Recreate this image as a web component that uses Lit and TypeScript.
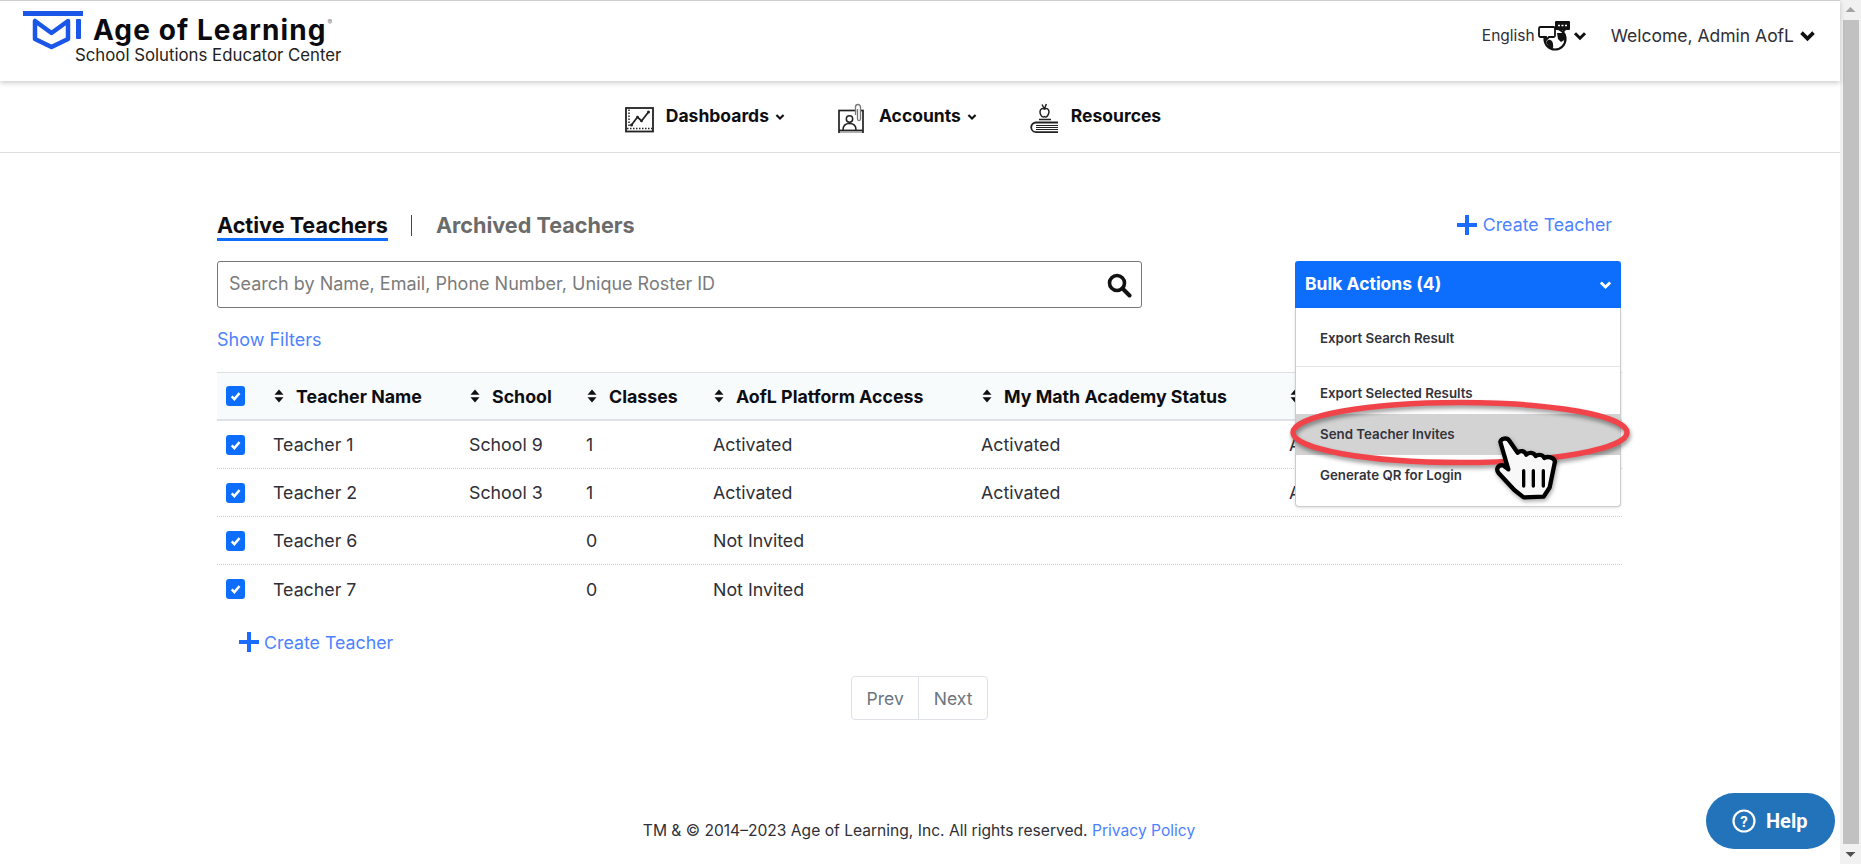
import {css, html, LitElement} from 'lit';
import {customElement} from 'lit/decorators.js';

const chevron = (cls: string) => html`<svg class=${cls} viewBox="0 0 14 10"><path d="M2 2.200l5 5 5-5" fill="none" stroke="currentColor" stroke-width="3"/></svg>`;
const sortIcon = html`<svg class="sort" viewBox="0 0 10 14"><path d="M5 0.500L9.500 5.800H.5zM5 13.500L.5 8.200h9z" fill="#111"/></svg>`;
const plus = (cls: string) => html`<svg class=${cls} viewBox="0 0 20 20"><path d="M10 0v20M0 10h20" stroke="#1a6bff" stroke-width="4" fill="none"/></svg>`;
const check = html`<span class="box"><svg viewBox="0 0 20 20"><path d="M6 10.500l2.800 2.800 5.400-6.300" fill="none" stroke="#fff" stroke-width="2.600"/></svg></span>`;

const rows = [
    {name: "Teacher 1", school: "School 9", classes: "1", access: "Activated", status: "Activated", last: "Activated"},
    {name: "Teacher 2", school: "School 3", classes: "1", access: "Activated", status: "Activated", last: "Activated"},
    {name: "Teacher 6", school: "", classes: "0", access: "Not Invited", status: "", last: ""},
    {name: "Teacher 7", school: "", classes: "0", access: "Not Invited", status: "", last: ""},
];
const columns = ["Teacher Name", "School", "Classes", "AofL Platform Access", "My Math Academy Status", "Status"];

@customElement('app-root')
export class AppRoot extends LitElement {
    static override styles = css`
      :host {
        display: flex;
        height: 864px;
        overflow: hidden;
        font-family: "Inter", "Lato", sans-serif;
        color: #2f2f37;
        position: relative;
      }
      .page { flex: 1; min-width: 0; display: flex; flex-direction: column; position: relative; }
      .scrollbar {
        width: 21px;
        background: #f1f1f1;
        display: flex;
        flex-direction: column;
        align-items: center;
      }
      .arrow { height: 20px; width: 100%; flex: none; }
      .thumb { flex: 1; width: 16px; background: #c1c1c1; }

      .top {
        height: 80px;
        border-top: 1px solid #cfcfcf;
        display: flex;
        align-items: flex-start;
        justify-content: space-between;
        box-shadow: 0 2px 5px rgba(0, 0, 0, 0.2);
        position: relative;
        background: #fff;
      }
      .logo { display: flex; padding: 9px 0 0 23px; }
      .logo-mark { width: 60px; height: 41px; flex: none; }
      .logo-text { margin-left: 10px; margin-top: -3px; }
      .logo-name { font: 700 28px/31px "Inter", sans-serif; color: #0b0b0f; letter-spacing: 1.100px; }
      .logo-name sup { font-size: 7px; font-weight: 400; color: #777; vertical-align: 15px; letter-spacing: 0; margin-left: 1px; }
      .logo-sub { font-size: 16.800px; line-height: 19px; color: #222; margin-left: -18px; }
      .user { display: flex; align-items: center; padding: 19px 24px 0 0; }
      .lang { font-size: 15.500px; }
      .globe { width: 32px; height: 31px; margin-left: 3px; }
      .chev-sm { width: 14px; height: 10px; color: #111; margin-left: 3px; }
      .welcome { font-size: 17.500px; margin-left: 24px; }
      .chev-lg { width: 17px; height: 12px; color: #111; margin-left: 5px; }

      nav {
        height: 71px;
        border-bottom: 1px solid #dedede;
        display: flex;
        justify-content: center;
        padding-right: 55px;
      }
      .nav-item { display: flex; align-items: center; margin: 0 26px; font-weight: 700; font-size: 17.500px; color: #0e0e12; }
      .nav-item svg.icon { width: 32px; height: 32px; margin-right: 10px; flex: none; }
      .nav-item .label { margin-top: -3px; }
      .nav-chev { width: 10px; height: 8px; margin-left: 6px; color: #111; }

      main { padding: 0 218px 0 217px; position: relative; flex: 1; }
      .tabs { display: flex; align-items: flex-start; justify-content: space-between; padding-top: 60px; height: 48px; }
      .tab-group { display: flex; align-items: flex-start; font-size: 21.600px; font-weight: 700; }
      .tab-active { color: #0e0e12; border-bottom: 3px solid #0d6efd; line-height: 25px; }
      .sep { width: 1px; height: 21px; background: #444; margin: 2px 24px 0 23px; }
      .tab-off { color: #6b6b6b; line-height: 25px; }
      .create { display: flex; align-items: center; color: #4d82ff; font-size: 17.800px; }
      .create-top { margin: -2px 10px 0 0; height: 27px; }
      .plus-top { width: 20px; height: 20px; margin-right: 6px; }
      .plus-low { width: 20px; height: 20px; margin-right: 5px; }

      .search {
        width: 925px;
        height: 47px;
        box-sizing: border-box;
        border: 1px solid #777;
        border-radius: 3px;
        display: flex;
        align-items: center;
        justify-content: space-between;
        padding: 0 9px 2px 11px;
        color: #7b7b7b;
        font-size: 18px;
      }
      .search svg { width: 26px; height: 26px; margin-top: 2px; }

      .filters { color: #4d82ff; font-size: 18px; line-height: 22px; margin: 21px 0 0 0; height: 43px; }

      .row {
        display: grid;
        grid-template-columns: 48px 196px 117px 127px 268px 308px 1fr;
        align-items: center;
        height: 48.100px;
        box-sizing: border-box;
        border-bottom: 1px dotted #ccc;
        font-size: 17.800px;
      }
      .head {
        height: 49px;
        background: #f7fbfc;
        border-top: 1px solid #dee2e6;
        border-bottom: 2px solid #dee2e6;
        font-weight: 700;
        font-size: 17.800px;
        color: #0e0e12;
      }
      .body .row:last-child { border-bottom: none; }
      .cell { padding-left: 8px; white-space: nowrap; overflow: hidden; }
      .cell-sort { padding-left: 9px; display: flex; align-items: center; white-space: nowrap; }
      .sort { width: 10px; height: 14px; margin-right: 12px; flex: none; }
      .box {
        display: block;
        width: 19px;
        height: 20px;
        background: #0d6efd;
        border-radius: 3px;
        margin-left: 9px;
      }
      .box svg { display: block; width: 100%; height: 100%; }
      .create-low { margin: 13px 0 0 22px; height: 32px; }

      .pager-wrap { display: flex; justify-content: center; margin-top: 18px; }
      .pager { display: flex; height: 44px; box-sizing: border-box; border: 1px solid #dee2e6; border-radius: 4px; color: #6c757d; font-size: 17.500px; }
      .pager span { display: flex; align-items: center; padding: 0 14.500px; }
      .pager span + span { border-left: 1px solid #dee2e6; }

      footer { position: absolute; left: 0; right: 0; top: 821px; text-align: center; font-size: 15.600px; line-height: 20px; color: #2f2f37; padding-right: 2px; }
      footer a { color: #4d82ff; }

      .menu-wrap { position: absolute; left: 1295px; top: 261px; width: 326px; }
      .bulk {
        height: 47px;
        background: #0d6efd;
        color: #fff;
        font-weight: 700;
        font-size: 17.500px;
        display: flex;
        align-items: center;
        justify-content: space-between;
        padding: 0 9px 2px 10px;
        box-sizing: border-box;
        border-radius: 3px 3px 0 0;
      }
      .bulk svg { width: 13px; height: 10px; margin-top: 2px; }
      .menu {
        background: #fff;
        border: 1px solid #ccc;
        border-top: none;
        border-radius: 0 0 4px 4px;
        height: 199px;
        box-sizing: border-box;
        font-size: 13.300px;
        font-weight: 600;
        color: #33333c;
        box-shadow: 0 1px 3px rgba(0, 0, 0, 0.12);
      }
      .menu div { padding-left: 24px; display: flex; align-items: center; box-sizing: border-box; }
      .menu .first { height: 59px; padding-top: 2px; border-bottom: 1px solid #e4e4e4; }
      .menu .second { height: 47px; padding-top: 4px; }
      .menu .pick { height: 41px; padding-bottom: 1px; background: #d3d3d3; }
      .menu .last { height: 40px; }

      .ring { position: absolute; left: 1282px; top: 392px; width: 360px; height: 84px; overflow: visible; filter: drop-shadow(1px 3px 2px rgba(0, 0, 0, 0.4)); }
      .hand { position: absolute; left: 1480px; top: 428px; width: 92px; height: 80px; overflow: visible; filter: drop-shadow(1px 2px 2px rgba(0, 0, 0, 0.35)); }

      .help {
        position: absolute;
        left: 1706px;
        top: 793px;
        width: 129px;
        height: 56px;
        border-radius: 28px;
        background: #2273b9;
        color: #fff;
        font: 700 20px "Roboto", sans-serif;
        display: flex;
        align-items: center;
        padding-left: 26px;
        box-sizing: border-box;
      }
      .help svg { width: 24px; height: 24px; margin-right: 10px; }
    `;

    override render() {
        return html`
            <div class="page">
                <div class="top">
                    <div class="logo">
                        <svg class="logo-mark" viewBox="0 0 60 41">
                            <rect x="0" y="1" width="60" height="5" fill="#1a56e8"/>
                            <rect x="53" y="9" width="5" height="20" rx="1" fill="#1a56e8"/>
                            <path d="M12 11v18l16.500 8 16.500-8V11l-16.500 12z" fill="none" stroke="#1a56e8" stroke-width="4.500" stroke-linejoin="round"/>
                        </svg>
                        <div class="logo-text">
                            <div class="logo-name">Age of Learning<sup>®</sup></div>
                            <div class="logo-sub">School Solutions Educator Center</div>
                        </div>
                    </div>
                    <div class="user">
                        <span class="lang">English</span>
                        <svg class="globe" viewBox="0 0 32 31">
                            <circle cx="17" cy="19" r="10.500" fill="none" stroke="#111" stroke-width="2.200"/>
                            <path d="M10 20c3-1 5 2 5 4s1 3-1 5l-3-2-3-5zM19 13l8 0 1 6-5 3-3-3z" fill="#111"/>
                            <path d="M2.500 7h13a1.500 1.500 0 0 1 1.500 1.500v7a1.500 1.500 0 0 1-1.500 1.500H11l-3 3v-3H2.500A1.500 1.500 0 0 1 1 15.500v-7A1.500 1.500 0 0 1 2.500 7z" fill="#fff" stroke="#111" stroke-width="1.800"/>
                            <path d="M18 1h13a1 1 0 0 1 1 1v7a1 1 0 0 1-1 1h-3l-3 3v-3h-7a1 1 0 0 1-1-1V2a1 1 0 0 1 1-1z" fill="#111"/>
                            <path d="M20 5.500h2M23.500 5.500h2M27 5.500h2" stroke="#fff" stroke-width="1.600"/>
                        </svg>
                        ${chevron('chev-sm')}
                        <span class="welcome">Welcome, Admin AofL</span>
                        ${chevron('chev-lg')}
                    </div>
                </div>
                <nav>
                    <div class="nav-item">
                        <svg class="icon" viewBox="0 0 32 32">
                            <rect x="2" y="7" width="27" height="23.500" fill="none" stroke="#222" stroke-width="1.800"/>
                            <path d="M3 27.500h25M5 8.500v18" stroke="#222" stroke-width="1.500" stroke-dasharray="1.500 1.500" fill="none"/>
                            <path d="M7.500 24l6-8 4 4 7-9" fill="none" stroke="#222" stroke-width="1.800"/>
                            <circle cx="7.500" cy="24" r="1.500" fill="#222"/><circle cx="13.500" cy="16" r="1.300" fill="#222"/><circle cx="17.500" cy="20" r="1.300" fill="#222"/><circle cx="24.500" cy="11" r="1.500" fill="#222"/>
                        </svg>
                        <span class="label">Dashboards</span>${chevron('nav-chev')}
                    </div>
                    <div class="nav-item">
                        <svg class="icon" viewBox="0 0 32 32">
                            <rect x="2" y="9.500" width="24" height="23" fill="none" stroke="#222" stroke-width="1.700"/>
                            <path d="M2 29.500h24" stroke="#222" stroke-width="1.800"/>
                            <circle cx="12.500" cy="18" r="3.200" fill="none" stroke="#222" stroke-width="1.500"/>
                            <path d="M6 29c0-4.500 3-6.500 6.500-6.500s6.500 2 6.500 6.500" fill="none" stroke="#222" stroke-width="1.500"/>
                            <path d="M18.500 14V6a2.500 2.500 0 0 1 5 0v12a1.500 1.500 0 0 1-3 0V8" fill="#fff" stroke="#777" stroke-width="1.300"/>
                        </svg>
                        <span class="label">Accounts</span>${chevron('nav-chev')}
                    </div>
                    <div class="nav-item">
                        <svg class="icon" viewBox="0 0 32 32">
                            <path d="M15.500 8c-2-1.300-4.500 0-4.500 2.800s1.800 5.200 3.200 5.200 .8-.4 1.300-.4 .5.400 1.300.4 3.200-2.400 3.200-5.200-2.500-4.100-4.500-2.800z" fill="#fff" stroke="#222" stroke-width="1.500"/>
                            <path d="M15.500 8l-2.500-4.500M15.500 8l1.800-5M10 18.500h12" stroke="#222" stroke-width="1.500"/>
                            <path d="M29 21.500H7a4.800 4.800 0 0 0 0 9.600h22" fill="none" stroke="#222" stroke-width="1.800"/>
                            <path d="M7 24.500h22M7 26.500h22M7 28.500h22" stroke="#222" stroke-width="1.200"/>
                        </svg>
                        <span class="label">Resources</span>
                    </div>
                </nav>
                <main>
                    <div class="tabs">
                        <div class="tab-group">
                            <span class="tab-active">Active Teachers</span>
                            <span class="sep"></span>
                            <span class="tab-off">Archived Teachers</span>
                        </div>
                        <div class="create create-top">${plus('plus-top')}Create Teacher</div>
                    </div>
                    <div class="search">
                        <span>Search by Name, Email, Phone Number, Unique Roster ID</span>
                        <svg viewBox="0 0 26 26"><circle cx="11" cy="11" r="7.500" fill="none" stroke="#111" stroke-width="3.600"/><path d="M16.500 16.500l7 7" stroke="#111" stroke-width="4" stroke-linecap="round"/></svg>
                    </div>
                    <div class="filters">Show Filters</div>
                    <div class="row head">
                        <div>${check}</div>
                        ${columns.map(c => html`<div class="cell-sort">${sortIcon}<span>${c}</span></div>`)}
                    </div>
                    <div class="body">
                        ${rows.map(r => html`
                            <div class="row">
                                <div>${check}</div>
                                <div class="cell">${r.name}</div>
                                <div class="cell">${r.school}</div>
                                <div class="cell">${r.classes}</div>
                                <div class="cell">${r.access}</div>
                                <div class="cell">${r.status}</div>
                                <div class="cell">${r.last}</div>
                            </div>
                        `)}
                    </div>
                    <div class="create create-low">${plus('plus-low')}Create Teacher</div>
                    <div class="pager-wrap">
                        <div class="pager"><span>Prev</span><span>Next</span></div>
                    </div>
                </main>
                <footer>TM &amp; © 2014–2023 Age of Learning, Inc. All rights reserved. <a>Privacy Policy</a></footer>
            </div>
            <div class="scrollbar">
                <svg class="arrow" viewBox="0 0 21 20"><path d="M10.500 7l5 5h-10z" fill="#a3a3a3"/></svg>
                <div class="thumb"></div>
                <svg class="arrow" viewBox="0 0 21 20"><path d="M10.500 13l-5-5h10z" fill="#505050"/></svg>
            </div>

            <div class="menu-wrap">
                <div class="bulk"><span>Bulk Actions (4)</span>${chevron('')}</div>
                <div class="menu">
                    <div class="first">Export Search Result</div>
                    <div class="second">Export Selected Results</div>
                    <div class="pick">Send Teacher Invites</div>
                    <div class="last">Generate QR for Login</div>
                </div>
            </div>
            <svg class="ring" viewBox="0 0 360 84"><ellipse cx="178" cy="40.500" rx="167" ry="30" fill="none" stroke="#f0444a" stroke-width="5.500"/></svg>
            <svg class="hand" viewBox="0 0 270 240">
                <path d="M58 42C60 30 78 28 85 38L110 74C118 66 130 68 136 80 142 72 158 72 164 84 172 78 186 80 190 90 200 84 218 88 222 100L206 178 188 206 128 208 100 186 52 134C44 122 52 110 66 112L82 124z" fill="#f8f8f8" stroke="#000" stroke-width="13" stroke-linejoin="round"/>
                <path d="M128 128v46M157 128v46M187 128v46" stroke="#000" stroke-width="10" stroke-linecap="round"/>
            </svg>
            <div class="help">
                <svg viewBox="0 0 24 24"><circle cx="12" cy="12" r="10.500" fill="none" stroke="#fff" stroke-width="2.200"/><text x="12" y="17.500" text-anchor="middle" fill="#fff" font-family="Roboto" font-weight="700" font-size="15">?</text></svg>
                Help
            </div>
        `;
    }
}

declare global {
    interface HTMLElementTagNameMap {
        'app-root': AppRoot;
    }
}
